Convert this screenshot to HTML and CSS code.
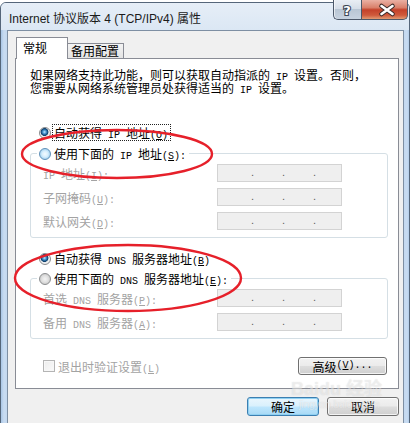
FILE: index.html
```html
<!DOCTYPE html>
<html lang="zh-CN">
<head>
<meta charset="utf-8">
<title>Internet 协议版本 4 (TCP/IPv4) 属性</title>
<link rel="stylesheet" href="styles.css">
</head>
<body>
<div class="window">
  <div class="titlebar">
    <span class="title">Internet 协议版本 4 (TCP/IPv4) 属性</span>
    <div class="caption-btns">
      <span class="cap-btn help">
        <svg width="28" height="20" viewBox="0 0 28 20"><text x="14" y="16" text-anchor="middle" class="help-glyph">?</text></svg>
      </span>
      <span class="cap-btn close">
        <svg width="47" height="20" viewBox="0 0 47 20">
          <path d="M20.5 7 L31.5 15 M31.5 7 L20.5 15" stroke="#3a2a28" stroke-width="4.6" stroke-linecap="round" fill="none"/>
          <path d="M20.5 7 L31.5 15 M31.5 7 L20.5 15" stroke="#ffffff" stroke-width="2.6" stroke-linecap="round" fill="none"/>
        </svg>
      </span>
    </div>
  </div>
  <div class="client">
    <div class="tabs">
      <div class="tab active">常规</div>
      <div class="tab">备用配置</div>
    </div>
    <div class="panel">
      <p class="desc">如果网络支持此功能，则可以获取自动指派的<span class="lat"> IP </span>设置。否则，<br>您需要从网络系统管理员处获得适当的<span class="lat"> IP </span>设置。</p>

      <div class="radio-row first">
        <span class="radio checked"></span>
        <span class="rtext focus">自动获得<span class="lat"> IP </span>地址<span class="lat">(<u>O</u>)</span></span>
      </div>

      <div class="group g-ip">
        <div class="group-head">
          <span class="radio hover"></span>
          <span class="rtext">使用下面的<span class="lat"> IP </span>地址<span class="lat">(<u>S</u>):</span></span>
        </div>
        <div class="field-row">
          <span class="flabel"><span class="lat">IP </span>地址<span class="lat">(<u>I</u>):</span></span>
          <span class="ipbox"><i>.</i><i>.</i><i>.</i></span>
        </div>
        <div class="field-row">
          <span class="flabel">子网掩码<span class="lat">(<u>U</u>):</span></span>
          <span class="ipbox"><i>.</i><i>.</i><i>.</i></span>
        </div>
        <div class="field-row">
          <span class="flabel">默认网关<span class="lat">(<u>D</u>):</span></span>
          <span class="ipbox"><i>.</i><i>.</i><i>.</i></span>
        </div>
      </div>

      <div class="radio-row dns-auto">
        <span class="radio checked"></span>
        <span class="rtext">自动获得<span class="lat"> DNS </span>服务器地址<span class="lat">(<u>B</u>)</span></span>
      </div>

      <div class="group g-dns">
        <div class="group-head">
          <span class="radio"></span>
          <span class="rtext">使用下面的<span class="lat"> DNS </span>服务器地址<span class="lat">(<u>E</u>):</span></span>
        </div>
        <div class="field-row">
          <span class="flabel">首选<span class="lat"> DNS </span>服务器<span class="lat">(<u>P</u>):</span></span>
          <span class="ipbox"><i>.</i><i>.</i><i>.</i></span>
        </div>
        <div class="field-row">
          <span class="flabel">备用<span class="lat"> DNS </span>服务器<span class="lat">(<u>A</u>):</span></span>
          <span class="ipbox"><i>.</i><i>.</i><i>.</i></span>
        </div>
      </div>

      <div class="check-row">
        <span class="checkbox"></span>
        <span class="ctext">退出时验证设置<span class="lat">(<u>L</u>)</span></span>
        <span class="btn adv">高级<span class="lat">(<u>V</u>)...</span></span>
      </div>
    </div>
    <div class="actions">
      <span class="btn default">确定</span>
      <span class="btn">取消</span>
    </div>
  </div>

  <div class="watermark">
    <span class="wm-main">Bai<span class="wm-paw">du</span> 经验</span>
    <span class="wm-sub">jingyan.baidu.com</span>
  </div>

  <svg class="marks" width="410" height="423" viewBox="0 0 410 423">
    <ellipse cx="117" cy="154" rx="95" ry="24" fill="none" stroke="#e6202a" stroke-width="2.4"/>
    <ellipse cx="128" cy="278" rx="113" ry="33" fill="none" stroke="#e6202a" stroke-width="2.4"/>
  </svg>
</div>
</body>
</html>
```
FILE: styles.css
```css
* { box-sizing: border-box; }
html, body { margin: 0; padding: 0; }
body {
  width: 410px;
  height: 423px;
  overflow: hidden;
  background: #ffffff;
  font-family: "Noto Sans CJK SC", sans-serif;
  font-size: 12px;
  color: #000;
}
.window {
  position: relative;
  margin-top: 2px;
  width: 410px;
  height: 440px;
  border: 1px solid #55667a;
  border-radius: 6px 6px 0 0;
  background: linear-gradient(90deg, #a9c6e6 0px, #c9dcf1 3px, #c3d8ef 6px, #c3d8ef 403px, #c9dcf1 406px, #a9c6e6 409px);
  display: flex;
  flex-direction: column;
}
.titlebar {
  height: 27px;
  display: flex;
  align-items: center;
  padding: 0 1px 0 8px;
  background: linear-gradient(#e6eef7, #dbe7f4);
  border-radius: 5px 5px 0 0;
}
.title {
  font-family: "Liberation Sans", "Noto Sans CJK SC", sans-serif;
  font-size: 12px;
  color: #1b1b1b;
  padding-top: 2px;
}
.caption-btns {
  margin-left: auto;
  align-self: flex-start;
  margin-top: -3px;
  display: flex;
}
.cap-btn {
  display: block;
  height: 20px;
  border: 1px solid #4c5869;
  border-top: 0;
}
.cap-btn svg { display: block; }
.help {
  width: 28px;
  border-right: 0;
  border-radius: 0 0 0 5px;
  background: linear-gradient(#e9eef4 0%, #d6dee8 45%, #b9c6d4 50%, #c7d3e0 100%);
  box-shadow: inset 1px 0 0 rgba(255,255,255,.6);
}
.help svg { margin-left: -1px; margin-top: -1px; }
.help-glyph {
  font-family: "DejaVu Sans", sans-serif;
  font-weight: bold;
  font-size: 13px;
  fill: #ffffff;
  stroke: #3c4654;
  stroke-width: 2.2px;
  paint-order: stroke;
}
.close {
  width: 47px;
  border-radius: 0 0 5px 0;
  background: linear-gradient(#eab1a4 0%, #d9806b 40%, #c4412a 52%, #cf5a3c 80%, #e29b73 100%);
}
.close svg { margin-left: -1px; margin-top: -1px; }

.client {
  flex: 1;
  margin: 0 5px 0 6px;
  border: 1px solid #7e8fa3;
  background: #f0f0f0;
  padding: 6px 4px 0 7px;
  display: flex;
  flex-direction: column;
}
.tabs {
  height: 22px;
  margin: 0 0 -1px 1px;
  display: flex;
  align-items: flex-end;
  position: relative;
  z-index: 1;
}
.tab {
  border: 1px solid #898c95;
  border-bottom: 0;
  line-height: 13px;
}
.tab.active {
  height: 22px;
  width: 52px;
  background: #ffffff;
  padding: 3px 0 0 6px;
}
.tab:not(.active) {
  height: 15px;
  margin-bottom: 1px;
  width: 56px;
  border-left: 0;
  padding: 0 0 0 3px;
  background: linear-gradient(#f3f3f3, #e3e3e3);
}
.panel {
  border: 1px solid #898c95;
  background: #ffffff;
  padding: 9px 10px 13px 14px;
  display: flex;
  flex-direction: column;
}
.desc {
  margin: 0;
  height: 26px;
  line-height: 13px;
  white-space: nowrap;
}
.lat {
  font-family: "Liberation Mono", monospace;
  font-size: 10px;
  line-height: 4px;
  white-space: pre;
}
.radio-row {
  height: 13px;
  display: flex;
  align-items: center;
  padding-left: 9px;
}
.radio-row.first { margin-top: 32px; }
.radio-row.dns-auto { margin-top: 14px; }
.rtext { line-height: 13px; height: 13px; margin-left: 3px; white-space: nowrap; }
.rtext.focus { outline: 1px dotted #222; outline-offset: 1px; padding-right: 1px; }
.radio {
  flex: none;
  width: 12px;
  height: 12px;
  border-radius: 50%;
  border: 1px solid #8a8c8e;
  background: radial-gradient(circle at 50% 50%, #f4f4f4 0, #e2e2e2 3px, #cfcfcf 5px, #f6f6f6 6px);
}
.radio.checked {
  background: radial-gradient(circle at 45% 40%, #c9ebff 0, #5aa6dc 1.4px, #1f5f95 2.8px, #0d3b66 3.6px, #dfe4e8 4.2px, #f3f3f3 5px, #e6e6e6 6px);
}
.radio.hover {
  border-color: #5f90b8;
  background: radial-gradient(circle at 50% 50%, #f4fbff 0, #d6eefc 3px, #a9d5f2 5px, #e4f3fc 6px);
}
.group {
  border: 1px solid #d5dfe5;
  border-radius: 3px;
  padding: 0 0 7px 12px;
  display: flex;
  flex-direction: column;
  gap: 6px;
}
.g-ip { margin-top: 14px; }
.g-dns { margin-top: 13px; }
.group-head {
  margin: -7px 0 -2px -6px;
  align-self: flex-start;
  height: 13px;
  background: #ffffff;
  padding: 0 3px 0 2px;
  display: flex;
  align-items: center;
}
.field-row {
  height: 18px;
  display: flex;
  align-items: center;
}
.flabel {
  width: 174px;
  height: 13px;
  color: #a3a3a3;
  line-height: 13px;
  white-space: nowrap;
}
.ipbox {
  width: 125px;
  height: 18px;
  border: 1px solid #d3d3d3;
  background: #efefef;
  display: flex;
  padding-left: 33px;
  gap: 28px;
  font-family: "Liberation Sans", sans-serif;
  font-size: 11px;
  line-height: 14px;
  color: #606060;
}
.ipbox i { font-style: normal; width: 3px; }
.check-row {
  margin-top: 18px;
  height: 18px;
  display: flex;
  align-items: center;
  padding-left: 13px;
}
.checkbox {
  width: 12px;
  height: 12px;
  border: 1px solid #b4b4b4;
  background: linear-gradient(135deg, #ececec, #fafafa);
  box-shadow: inset 0 0 0 1px #f7f7f7;
}
.ctext { margin-left: 3px; color: #a3a3a3; line-height: 13px; height: 13px; }
.btn {
  height: 19px;
  border: 1px solid #707070;
  border-radius: 3px;
  background: linear-gradient(#f2f2f2 0%, #ebebeb 48%, #dddddd 52%, #cfcfcf 100%);
  box-shadow: inset 0 0 0 1px rgba(255,255,255,.75);
  display: flex;
  align-items: center;
  justify-content: center;
  line-height: 13px;
  white-space: nowrap;
}
.btn.adv {
  margin-left: auto;
  margin-right: 1px;
  width: 89px;
  height: 18px;
}
.actions {
  margin-top: 8px;
  display: flex;
  justify-content: flex-end;
  gap: 8px;
}
.actions .btn { width: 72px; }
.btn.default {
  border-color: #3c7fb1;
  background: linear-gradient(#eaf6fd 0%, #d9f0fc 48%, #bee6fd 52%, #a7d9f5 100%);
  box-shadow: inset 0 0 0 1px #8fd0f2;
}
.watermark {
  position: absolute;
  left: 290px;
  top: 376px;
  display: flex;
  flex-direction: column;
  align-items: flex-start;
  pointer-events: none;
}
.wm-main {
  font-family: "Liberation Sans", "Noto Sans CJK SC", sans-serif;
  font-weight: bold;
  font-size: 18px;
  line-height: 20px;
  color: rgba(255,255,255,.45);
  text-shadow: 0 0 1px rgba(120,120,120,.25);
}
.wm-sub {
  font-family: "Liberation Sans", sans-serif;
  font-size: 10px;
  line-height: 11px;
  margin-left: 8px;
  color: rgba(255,255,255,.5);
  text-shadow: 0 0 1px rgba(120,120,120,.25);
}
.marks {
  position: absolute;
  left: -1px;
  top: -3px;
  pointer-events: none;
}
```
